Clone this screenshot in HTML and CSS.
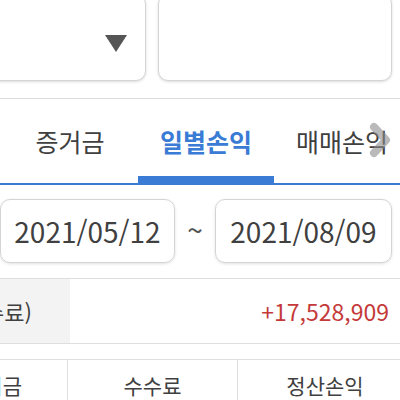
FILE: index.html
```html
<!DOCTYPE html>
<html lang="ko">
<head>
<meta charset="utf-8">
<link rel="stylesheet" href="styles.css">
</head>
<body>
<div class="page">
  <div class="top">
    <div class="select">
      <svg class="caret" width="22" height="17" viewBox="0 0 22 17"><polygon points="0,0 22,0 11,17" fill="#555"/></svg>
    </div>
    <div class="field"></div>
  </div>
  <div class="tabs">
    <div class="tab">증거금</div>
    <div class="tab active">일별손익</div>
    <div class="tab">매매손익</div>
    <svg class="more" width="26" height="36" viewBox="0 0 26 36"><polyline points="7,5 19,18 7,31" fill="none" stroke="rgba(140,140,140,0.6)" stroke-width="8" stroke-linecap="round" stroke-linejoin="round"/></svg>
  </div>
  <div class="dates">
    <div class="date">2021/05/12</div>
    <div class="tilde">~</div>
    <div class="date date-end">2021/08/09</div>
  </div>
  <div class="summary">
    <div class="sum-label"><span>총손익(수수료)</span></div>
    <div class="sum-value">+17,528,909</div>
  </div>
  <div class="thead">
    <div class="th th-first">증거금</div>
    <div class="th th-mid">수수료</div>
    <div class="th th-last">정산손익</div>
  </div>
</div>
</body>
</html>
```

FILE: styles.css
```css
html, body {
  margin: 0;
  padding: 0;
  background: #fff;
}
body {
  width: 400px;
  height: 400px;
  overflow: hidden;
  font-family: "Noto Sans CJK KR", "Noto Sans", sans-serif;
  color: #404040;
}
.page {
  width: 400px;
}
.top {
  display: flex;
  gap: 12px;
  margin-top: -6px;
  padding-bottom: 17px;
}
.select, .field {
  height: 87px;
  box-sizing: border-box;
  border: 1px solid #d4d4d4;
  border-radius: 10px;
  box-shadow: 0 1px 3px rgba(0,0,0,0.14);
  background: #fff;
}
.select {
  width: 166px;
  margin-left: -20px;
  display: flex;
  align-items: center;
  justify-content: flex-end;
  padding-right: 18px;
}
.caret {
  margin-top: 12px;
}
.field {
  width: 234px;
}
.tabs {
  position: relative;
  display: flex;
  padding-left: 2px;
  border-top: 1px solid #dcdcdc;
  border-bottom: 2px solid #3a7bd5;
}
.tab {
  flex: 0 0 136px;
  height: 84px;
  box-sizing: border-box;
  padding-top: 7px;
  border-bottom: 7px solid transparent;
  display: flex;
  align-items: center;
  justify-content: center;
  font-size: 25px;
  color: #404040;
  white-space: nowrap;
}
.tab.active {
  color: #3a7bd5;
  font-weight: 700;
  border-bottom-color: #3a7bd5;
}
.more {
  position: absolute;
  left: 367px;
  top: 23px;
}
.dates {
  display: flex;
  align-items: center;
  padding: 14px 0 15px 0;
  border-bottom: 1px solid #dedede;
}
.date {
  width: 175px;
  height: 64px;
  box-sizing: border-box;
  border: 1px solid #d4d4d4;
  border-radius: 10px;
  box-shadow: 0 1px 3px rgba(0,0,0,0.12);
  display: flex;
  align-items: center;
  justify-content: center;
  font-size: 28px;
  color: #404040;
}
.date-end {
  width: 177px;
}
.tilde {
  width: 40px;
  text-align: center;
  font-size: 28px;
  color: #555;
  margin-top: -4px;
}
.summary {
  display: flex;
  height: 64px;
  border-bottom: 1px solid #dedede;
}
.sum-label {
  width: 70px;
  background: #f3f3f3;
  display: flex;
  align-items: center;
  justify-content: flex-end;
  padding-right: 38px;
  box-sizing: border-box;
  overflow: hidden;
  font-size: 22px;
  color: #404040;
  white-space: nowrap;
}
.sum-label span {
  flex-shrink: 0;
}
.sum-value {
  flex: 1;
  display: flex;
  align-items: center;
  justify-content: flex-end;
  padding-right: 11px;
  font-size: 23px;
  color: #c43a3a;
}
.thead {
  display: flex;
  margin-top: 15px;
  border-top: 1px solid #dedede;
  height: 60px;
}
.th {
  flex-shrink: 0;
  box-sizing: border-box;
  padding-top: 10px;
  text-align: center;
  font-size: 21px;
  color: #404040;
  white-space: nowrap;
}
.th-first {
  width: 149px;
  margin-left: -81px;
  border-right: 1px solid #dedede;
}
.th-mid {
  width: 170px;
  border-right: 1px solid #dedede;
}
.th-last {
  width: 174px;
}
```
